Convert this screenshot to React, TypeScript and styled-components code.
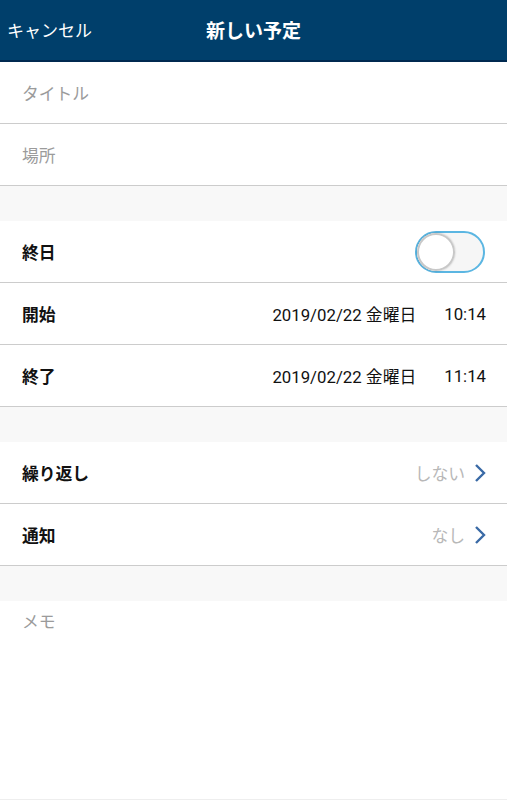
import styled, { createGlobalStyle } from 'styled-components';

const GlobalStyle = createGlobalStyle`
  html, body {
    margin: 0;
    padding: 0;
    background: #fff;
  }
  body {
    font-family: Roboto, "Noto Sans CJK JP", sans-serif;
  }
`;

const Page = styled.div`
  width: 507px;
  height: 800px;
  display: flex;
  flex-direction: column;
  overflow: hidden;
`;

const Header = styled.header`
  height: 60px;
  background: #003f6b;
  border-bottom: 2px solid #002950;
  display: grid;
  grid-template-columns: 1fr auto 1fr;
  align-items: center;
  color: #fff;
`;

const Cancel = styled.button`
  justify-self: start;
  background: none;
  border: none;
  color: #fff;
  font-family: inherit;
  font-size: 17px;
  padding: 0 0 2px 7px;
`;

const Title = styled.h1`
  margin: 0 0 2px 0;
  font-size: 19px;
  font-weight: 700;
`;

const Section = styled.section`
  display: flex;
  flex-direction: column;
  background: #fff;
`;

const Spacer = styled.div`
  height: 35px;
  background: #f8f8f8;
`;

const Row = styled.div`
  height: 61px;
  border-bottom: 1px solid #cccccc;
  display: flex;
  align-items: center;
  padding: 0 21px 0 22px;
  font-size: 16.8px;
`;

const Placeholder = styled.span`
  color: #9b9b9b;
`;

const Label = styled.span`
  font-weight: 700;
  color: #111;
  flex: 1;
`;

const DateText = styled.span`
  color: #111;
`;

const TimeText = styled.span`
  color: #111;
  margin-left: 28px;
`;

const Value = styled.span`
  color: #b8b8b8;
  margin-right: 9px;
`;

const Toggle = styled.div`
  width: 66px;
  height: 38px;
  border: 2px solid #5bb6e2;
  border-radius: 21px;
  background: #f6f6f6;
  position: relative;
  margin-right: 1px;
`;

const Knob = styled.div`
  position: absolute;
  left: 0;
  top: 0;
  width: 38px;
  height: 38px;
  border-radius: 50%;
  background: #fff;
  box-shadow: inset 0 0 0 2px #c8c8c8, 0 0 2px rgba(0, 0, 0, 0.25);
`;

const Memo = styled.div`
  flex: 1;
  padding: 8px 22px;
  font-size: 16.8px;
  border-bottom: 1px solid #eeeeee;
`;

const Chevron = () => (
  <svg width="12" height="20" viewBox="0 0 12 20">
    <path d="M2 2 L10 10 L2 18" fill="none" stroke="#3a6aa6" strokeWidth="2.4" />
  </svg>
);

export default function App() {
  return (
    <Page>
      <GlobalStyle />
      <Header>
        <Cancel>キャンセル</Cancel>
        <Title>新しい予定</Title>
        <span />
      </Header>
      <Section>
        <Row>
          <Placeholder>タイトル</Placeholder>
        </Row>
        <Row>
          <Placeholder>場所</Placeholder>
        </Row>
      </Section>
      <Spacer />
      <Section>
        <Row>
          <Label>終日</Label>
          <Toggle>
            <Knob />
          </Toggle>
        </Row>
        <Row>
          <Label>開始</Label>
          <DateText>2019/02/22 金曜日</DateText>
          <TimeText>10:14</TimeText>
        </Row>
        <Row>
          <Label>終了</Label>
          <DateText>2019/02/22 金曜日</DateText>
          <TimeText>11:14</TimeText>
        </Row>
      </Section>
      <Spacer />
      <Section>
        <Row>
          <Label>繰り返し</Label>
          <Value>しない</Value>
          <Chevron />
        </Row>
        <Row>
          <Label>通知</Label>
          <Value>なし</Value>
          <Chevron />
        </Row>
      </Section>
      <Spacer />
      <Memo>
        <Placeholder>メモ</Placeholder>
      </Memo>
    </Page>
  );
}
